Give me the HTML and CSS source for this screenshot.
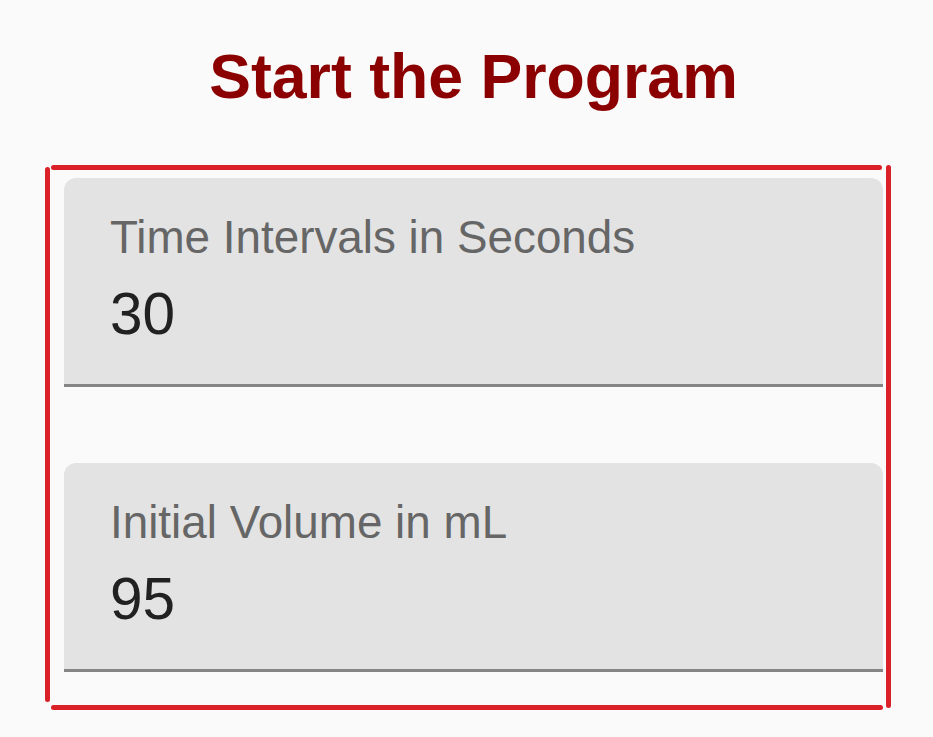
FILE: index.html
```html
<!DOCTYPE html>
<html>
<head>
<meta charset="utf-8">
<link rel="stylesheet" href="styles.css">
</head>
<body>
<h1 class="title">Start the Program</h1>
<div class="frame">
  <span class="line line-top"></span>
  <span class="line line-left"></span>
  <span class="line line-right"></span>
  <span class="line line-bottom"></span>
  <div class="fields">
    <div class="field">
      <div class="field-label">Time Intervals in Seconds</div>
      <div class="field-value">30</div>
    </div>
    <div class="field">
      <div class="field-label">Initial Volume in mL</div>
      <div class="field-value">95</div>
    </div>
  </div>
</div>
</body>
</html>
```

FILE: styles.css
```css
html, body {
  margin: 0;
  padding: 0;
  background: #fafafa;
  font-family: "Liberation Sans", Arial, sans-serif;
}

.title {
  margin: 41px 0 0 14px;
  height: 71px;
  line-height: 71px;
  font-size: 62.6px;
  font-weight: bold;
  color: #8b0000;
  text-align: center;
}

.frame {
  margin: 53px 0 0 45px;
  width: 846px;
  height: 545px;
  display: grid;
  grid-template-columns: 5px 1fr 5px;
  grid-template-rows: 5px 1fr 5px;
}

.line {
  background: #da2128;
  border-radius: 2.5px;
}

.line-top {
  grid-column: 2;
  grid-row: 1;
  margin: 0 4px 0 1px;
}

.line-bottom {
  grid-column: 2;
  grid-row: 3;
  margin: 0 3px 0 1px;
}

.line-left {
  grid-column: 1;
  grid-row: 1 / 4;
  margin: 2px 0 8px 0;
}

.line-right {
  grid-column: 3;
  grid-row: 1 / 4;
  margin: 0 0 2px 0;
}

.fields {
  grid-column: 2;
  grid-row: 2;
  padding: 8px 3px 33px 14px;
  display: flex;
  flex-direction: column;
  gap: 76px;
}

.field {
  height: 172px;
  background: #e3e3e3;
  border-radius: 12px 12px 0 0;
  border-bottom: 3px solid #858585;
  padding: 34px 0 0 46px;
}

.field-label {
  font-size: 45.8px;
  line-height: 52px;
  color: #666666;
}

.field-value {
  margin-top: 17px;
  font-size: 58.5px;
  line-height: 66px;
  color: #212121;
}
```
